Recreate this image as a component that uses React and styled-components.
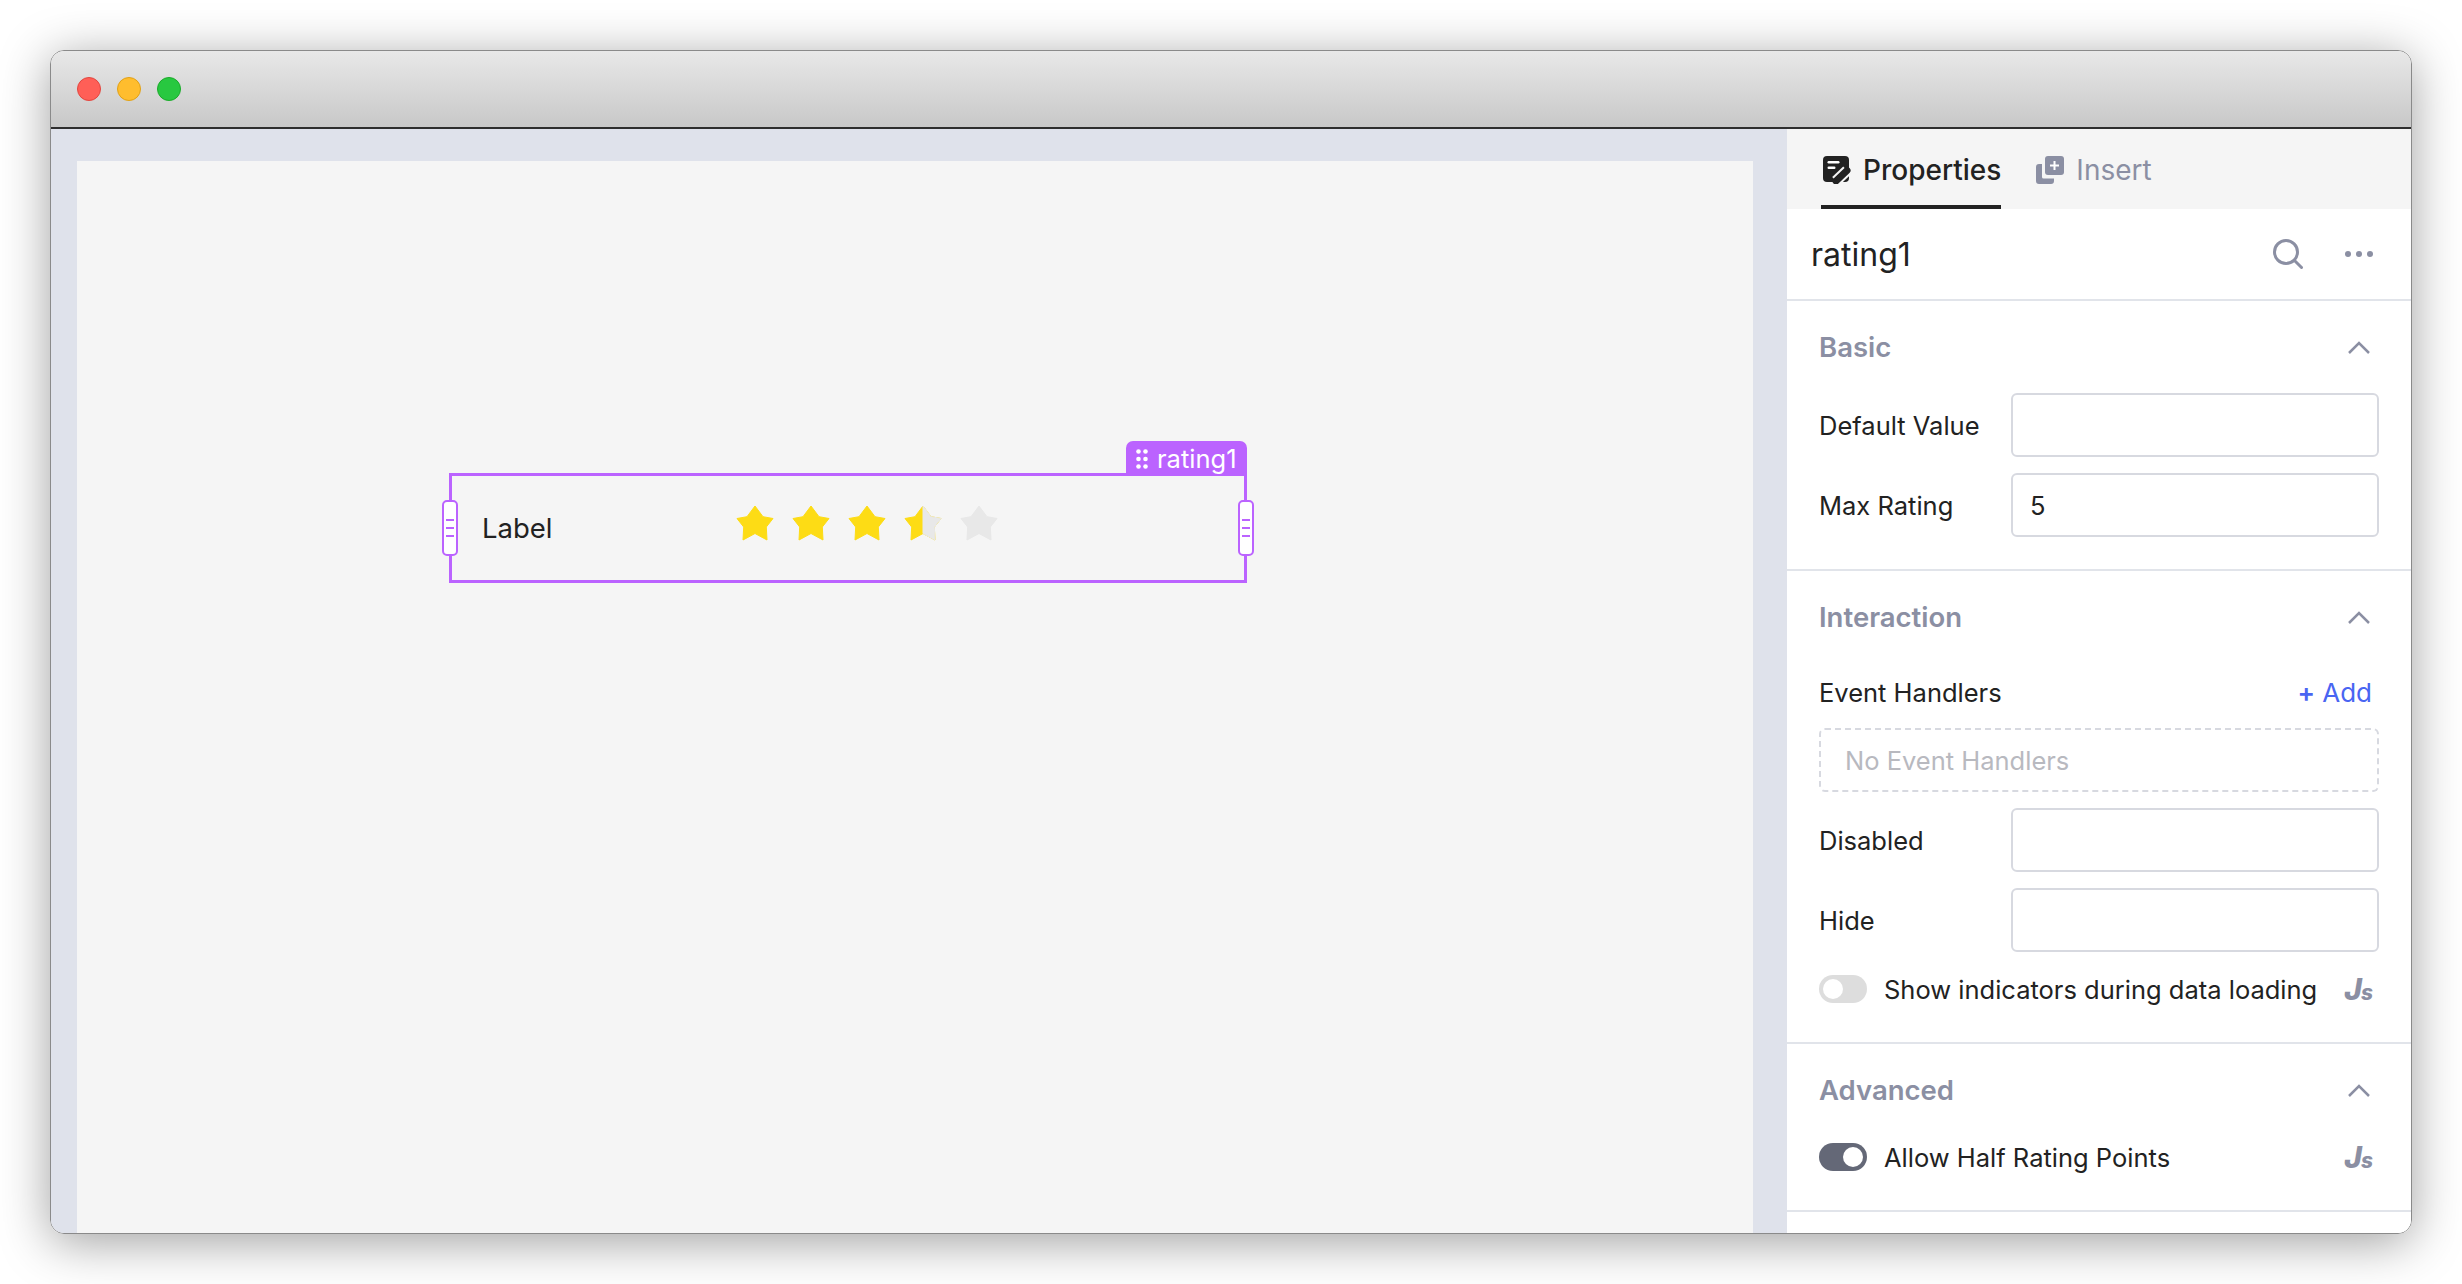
import styled, { createGlobalStyle } from "styled-components";

const GlobalStyle = createGlobalStyle`
  html, body {
    margin: 0;
    background: #fff;
  }
  body {
    font-family: Inter, "Liberation Sans", sans-serif;
    color: #222;
    overflow: hidden;
  }
`;

const Page = styled.div`
  width: 2462px;
  height: 1284px;
  padding: 50px;
  box-sizing: border-box;
`;

const Window = styled.div`
  width: 2362px;
  height: 1184px;
  box-sizing: border-box;
  display: flex;
  flex-direction: column;
  border: 1px solid #8a8a8a;
  border-radius: 14px;
  overflow: hidden;
  box-shadow: 0 8px 50px rgba(0, 0, 0, 0.38);
`;

const TitleBar = styled.div`
  height: 78px;
  flex: none;
  box-sizing: border-box;
  display: flex;
  align-items: center;
  gap: 16px;
  padding: 0 26px;
  background: linear-gradient(#e8e8e8, #c8c8c8);
  border-bottom: 2px solid #2e2e2e;
`;

const Light = styled.span`
  width: 24px;
  height: 24px;
  box-sizing: border-box;
  border-radius: 50%;
  background: ${(p) => p.$color};
  border: 1px solid ${(p) => p.$edge};
`;

const Body = styled.div`
  flex: 1;
  display: flex;
  min-height: 0;
`;

const CanvasArea = styled.div`
  flex: 1;
  display: flex;
  padding: 32px 34px 0 26px;
  background: #dfe2eb;
`;

const Canvas = styled.div`
  flex: 1;
  position: relative;
  background: #f5f5f5;
`;

const Widget = styled.div`
  position: absolute;
  left: 372px;
  top: 312px;
  width: 798px;
  height: 110px;
  box-sizing: border-box;
  display: flex;
  align-items: center;
  border: 3px solid #bb63ff;
  padding-left: 30px;
`;

const WidgetLabel = styled.span`
  width: 254px;
  font-size: 27.5px;
  color: #222;
`;

const Stars = styled.div`
  display: flex;
  gap: 18px;
  margin-top: -9px;
`;

const WidgetTag = styled.div`
  position: absolute;
  right: -3px;
  top: -35px;
  height: 35px;
  width: 121px;
  box-sizing: border-box;
  display: flex;
  align-items: center;
  gap: 9px;
  padding-left: 10px;
  background: #bb63ff;
  color: #fff;
  font-size: 25.5px;
  border-radius: 7px 7px 0 0;
`;

const Handle = styled.div`
  position: absolute;
  top: 24px;
  ${(p) => (p.$side === "left" ? "left: -10px;" : "right: -10px;")}
  width: 16px;
  height: 56px;
  box-sizing: border-box;
  display: flex;
  flex-direction: column;
  align-items: center;
  justify-content: center;
  gap: 6px;
  background: #fff;
  border: 2.5px solid #bb63ff;
  border-radius: 5px;

  i {
    width: 8px;
    height: 2px;
    background: #bb63ff;
  }
`;

const Panel = styled.div`
  width: 624px;
  flex: none;
  display: flex;
  flex-direction: column;
  background: #fff;
`;

const Tabs = styled.div`
  height: 80px;
  flex: none;
  display: flex;
  gap: 33px;
  padding-left: 34px;
  background: #f5f5f5;
`;

const Tab = styled.div`
  display: flex;
  align-items: center;
  gap: 12px;
  padding: 2px 0 0 2px;
  font-size: 28px;
  font-weight: ${(p) => (p.$active ? 500 : 400)};
  color: ${(p) => (p.$active ? "#222" : "#8b8fa3")};
  box-shadow: ${(p) => (p.$active ? "inset 0 -4px 0 #222" : "none")};
`;

const Header = styled.div`
  height: 90px;
  flex: none;
  display: flex;
  align-items: center;
  justify-content: space-between;
  padding: 0 38px 0 24px;
  font-size: 32px;
  color: #222;
  border-bottom: 2px solid #e1e4ea;
`;

const HeaderActions = styled.div`
  display: flex;
  align-items: center;
  gap: 42px;
`;

const Section = styled.section`
  padding: 24px 32px ${(p) => p.$bottom || 32}px;
  border-bottom: 2px solid #e1e4ea;
  display: flex;
  flex-direction: column;
`;

const SectionHead = styled.div`
  height: 44px;
  display: flex;
  align-items: center;
  justify-content: space-between;
  margin-bottom: 24px;
  padding-right: 9px;
  font-size: 27.5px;
  font-weight: 600;
  color: #8b8fa3;
`;

const Row = styled.div`
  height: 64px;
  display: grid;
  grid-template-columns: 192px 1fr;
  align-items: center;
  margin-bottom: ${(p) => (p.$last ? 0 : "16px")};
  font-size: 25.5px;
`;

const Input = styled.div`
  height: 64px;
  box-sizing: border-box;
  display: flex;
  align-items: center;
  padding: 0 17px;
  background: #fff;
  border: 2px solid #d7d9e0;
  border-radius: 6px;
`;

const HandlersRow = styled.div`
  height: 40px;
  margin: 9px 0 16px;
  display: flex;
  align-items: center;
  justify-content: space-between;
  padding-right: 7px;
  font-size: 25.5px;
`;

const AddLink = styled.span`
  font-size: 26px;
  color: #4965f2;

  b {
    font-weight: 600;
  }
`;

const EmptyBox = styled.div`
  height: 64px;
  box-sizing: border-box;
  display: flex;
  align-items: center;
  padding: 0 24px;
  margin-bottom: 16px;
  border: 2px dashed #d7d9e0;
  border-radius: 6px;
  font-size: 25.5px;
  color: #b8b9bf;
`;

const SwitchRow = styled.div`
  height: 44px;
  margin-top: -1px;
  display: flex;
  align-items: center;
  gap: 17px;
  padding-right: 7px;
  font-size: 25.5px;
`;

const Switch = styled.div`
  width: 48px;
  height: 28px;
  flex: none;
  box-sizing: border-box;
  display: flex;
  padding: 4px;
  justify-content: ${(p) => (p.$on ? "flex-end" : "flex-start")};
  border-radius: 14px;
  background: ${(p) => (p.$on ? "#646877" : "#dddddd")};

  &::after {
    content: "";
    width: 20px;
    height: 20px;
    border-radius: 50%;
    background: #fff;
  }
`;

const JsMark = styled.span`
  margin-left: auto;
  display: flex;
  align-items: baseline;
  font-size: 30px;
  line-height: 1;
  font-style: italic;
  font-weight: 800;
  letter-spacing: -1px;
  color: #8b8fa3;
  small {
    font-size: 21px;
  }
`;

const STAR = "M19 1l8 10.700 10 1.800-6.700 8.500.7 13-12-6.500-12 6.500.7-13L1 13.500l10-1.800z";
const STAR_RIGHT = "M19 1l8 10.700 10 1.800-6.700 8.500.7 13-12-6.500z";

const Star = ({ fill }) => {
  const main = fill === "empty" ? "#e8e8e8" : "#fddc15";
  return (
    <svg width="38" height="37" viewBox="0 0 38 37">
      <path d={STAR} fill={main} stroke={main} strokeWidth="1" strokeLinejoin="round" />
      {fill === "half" && (
        <path d={STAR_RIGHT} fill="#e8e8e8" stroke="#e8e8e8" strokeWidth="1" strokeLinejoin="round" />
      )}
    </svg>
  );
};

const GripIcon = () => (
  <svg width="12" height="20" viewBox="0 0 12 20" fill="#fff">
    <circle cx="2.500" cy="2.500" r="2.300" />
    <circle cx="9.500" cy="2.500" r="2.300" />
    <circle cx="2.500" cy="10" r="2.300" />
    <circle cx="9.500" cy="10" r="2.300" />
    <circle cx="2.500" cy="17.500" r="2.300" />
    <circle cx="9.500" cy="17.500" r="2.300" />
  </svg>
);

const PropertiesIcon = () => (
  <svg width="28" height="28" viewBox="0 0 28 28">
    <rect x="0" y="0" width="26" height="26" rx="4" fill="#222" />
    <rect x="4.500" y="5" width="12" height="2.500" rx="1.200" fill="#fff" />
    <rect x="4.500" y="10.500" width="8" height="2.500" rx="1.200" fill="#fff" />
    <path d="M13 25L24 14.500" stroke="#f5f5f5" strokeWidth="11" />
    <path d="M13 25L24 14.500" stroke="#222" strokeWidth="7" strokeLinecap="round" />
  </svg>
);

const InsertIcon = () => (
  <svg width="28" height="28" viewBox="0 0 28 28" fill="#8b8fa3">
    <path d="M6 8v13a1.500 1.500 0 0 0 1.500 1.500H18V25a3 3 0 0 1-3 3H3a3 3 0 0 1-3-3V11a3 3 0 0 1 3-3z" />
    <rect x="9" y="0" width="19" height="19" rx="3" />
    <path d="M17.500 5h2v3.500H23v2h-3.500V14h-2v-3.500H14v-2h3.500z" fill="#fff" />
  </svg>
);

const SearchIcon = () => (
  <svg width="30" height="30" viewBox="0 0 30 30" fill="none" stroke="#8b8fa3" strokeWidth="3" strokeLinecap="round">
    <circle cx="13" cy="13" r="11.500" />
    <path d="M22 22l6.500 6.500" />
  </svg>
);

const MoreIcon = () => (
  <svg width="28" height="6" viewBox="0 0 28 6" fill="#8b8fa3">
    <circle cx="3" cy="3" r="3" />
    <circle cx="14" cy="3" r="3" />
    <circle cx="25" cy="3" r="3" />
  </svg>
);

const Chevron = () => (
  <svg width="22" height="13" viewBox="0 0 22 13" fill="none" stroke="#8b8fa3" strokeWidth="2.500">
    <path d="M1 12L11 2l10 10" />
  </svg>
);

const Js = () => (
  <JsMark>
    J<small>s</small>
  </JsMark>
);

export default function App() {
  return (
    <Page>
      <GlobalStyle />
      <Window>
        <TitleBar>
          <Light $color="#ff5f57" $edge="#e2463f" />
          <Light $color="#ffbd2e" $edge="#e1a116" />
          <Light $color="#28c840" $edge="#1aab29" />
        </TitleBar>
        <Body>
          <CanvasArea>
            <Canvas>
              <Widget>
                <WidgetTag>
                  <GripIcon />
                  rating1
                </WidgetTag>
                <Handle $side="left"><i /><i /><i /></Handle>
                <Handle $side="right"><i /><i /><i /></Handle>
                <WidgetLabel>Label</WidgetLabel>
                <Stars>
                  <Star />
                  <Star />
                  <Star />
                  <Star fill="half" />
                  <Star fill="empty" />
                </Stars>
              </Widget>
            </Canvas>
          </CanvasArea>
          <Panel>
            <Tabs>
              <Tab $active>
                <PropertiesIcon />
                Properties
              </Tab>
              <Tab>
                <InsertIcon />
                Insert
              </Tab>
            </Tabs>
            <Header>
              rating1
              <HeaderActions>
                <SearchIcon />
                <MoreIcon />
              </HeaderActions>
            </Header>
            <Section>
              <SectionHead>
                Basic
                <Chevron />
              </SectionHead>
              <Row>
                Default Value
                <Input />
              </Row>
              <Row $last>
                Max Rating
                <Input>5</Input>
              </Row>
            </Section>
            <Section $bottom={31}>
              <SectionHead>
                Interaction
                <Chevron />
              </SectionHead>
              <HandlersRow>
                Event Handlers
                <AddLink><b>+</b> Add</AddLink>
              </HandlersRow>
              <EmptyBox>No Event Handlers</EmptyBox>
              <Row>
                Disabled
                <Input />
              </Row>
              <Row>
                Hide
                <Input />
              </Row>
              <SwitchRow>
                <Switch />
                Show indicators during data loading
                <Js />
              </SwitchRow>
            </Section>
            <Section $bottom={31}>
              <SectionHead>
                Advanced
                <Chevron />
              </SectionHead>
              <SwitchRow>
                <Switch $on />
                Allow Half Rating Points
                <Js />
              </SwitchRow>
            </Section>
          </Panel>
        </Body>
      </Window>
    </Page>
  );
}
